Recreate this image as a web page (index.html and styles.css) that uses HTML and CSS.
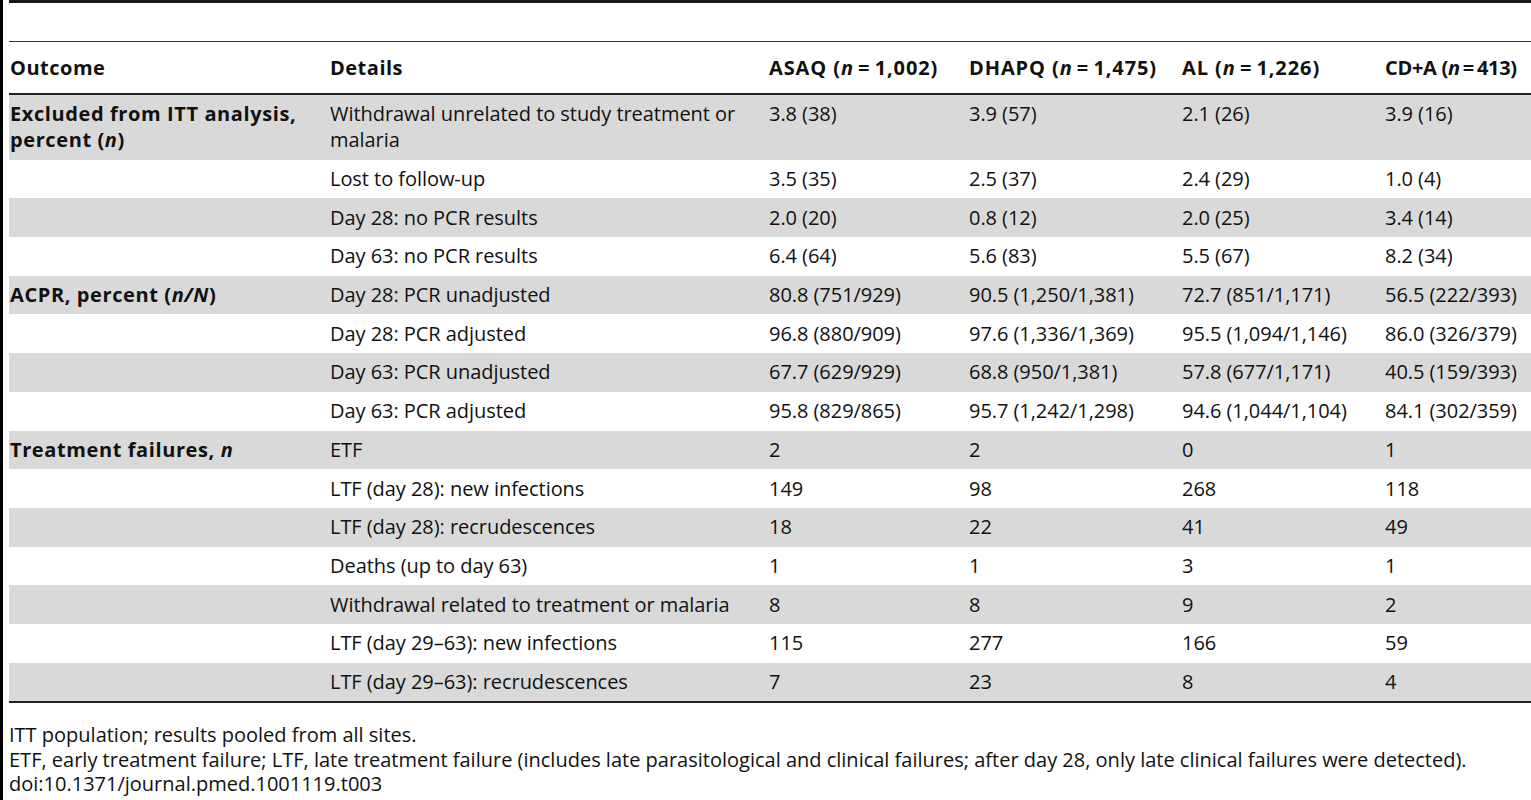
FILE: index.html
```html
<!DOCTYPE html>
<html lang="en">
  <head>
    <meta charset="UTF-8" />
    <title>Table 3 - Outcomes</title>
    <link rel="stylesheet" href="styles.css">
  </head>
  <body>
    <div class="page">
      <div class="caption-space"></div>
      <table class="results">
        <colgroup>
          <col class="c-outcome">
          <col class="c-details">
          <col class="c-asaq">
          <col class="c-dhapq">
          <col class="c-al">
          <col class="c-cda">
        </colgroup>
        <thead>
          <tr>
            <th>Outcome</th>
            <th>Details</th>
            <th class="arm">ASAQ (<i>n</i>&thinsp;=&thinsp;1,002)</th>
            <th class="arm">DHAPQ (<i>n</i>&thinsp;=&thinsp;1,475)</th>
            <th class="arm">AL (<i>n</i>&thinsp;=&thinsp;1,226)</th>
            <th class="arm narrow">CD+A (<i>n</i>&thinsp;=&thinsp;413)</th>
          </tr>
        </thead>
        <tbody>
          <!-- excluded -->
          <tr class="shade">
            <td class="group">Excluded from ITT analysis, percent (<i>n</i>)</td>
            <td>Withdrawal unrelated to study treatment or malaria</td>
            <td>3.8 (38)</td><td>3.9 (57)</td><td>2.1 (26)</td><td>3.9 (16)</td>
          </tr>
          <tr>
            <td></td><td>Lost to follow-up</td>
            <td>3.5 (35)</td><td>2.5 (37)</td><td>2.4 (29)</td><td>1.0 (4)</td>
          </tr>
          <tr class="shade">
            <td></td><td>Day 28: no PCR results</td>
            <td>2.0 (20)</td><td>0.8 (12)</td><td>2.0 (25)</td><td>3.4 (14)</td>
          </tr>
          <tr>
            <td></td><td>Day 63: no PCR results</td>
            <td>6.4 (64)</td><td>5.6 (83)</td><td>5.5 (67)</td><td>8.2 (34)</td>
          </tr>
          <!-- ACPR -->
          <tr class="shade">
            <td class="group">ACPR, percent (<i>n/N</i>)</td>
            <td>Day 28: PCR unadjusted</td>
            <td>80.8 (751/929)</td><td>90.5 (1,250/1,381)</td><td>72.7 (851/1,171)</td><td>56.5 (222/393)</td>
          </tr>
          <tr>
            <td></td><td>Day 28: PCR adjusted</td>
            <td>96.8 (880/909)</td><td>97.6 (1,336/1,369)</td><td>95.5 (1,094/1,146)</td><td>86.0 (326/379)</td>
          </tr>
          <tr class="shade">
            <td></td><td>Day 63: PCR unadjusted</td>
            <td>67.7 (629/929)</td><td>68.8 (950/1,381)</td><td>57.8 (677/1,171)</td><td>40.5 (159/393)</td>
          </tr>
          <tr>
            <td></td><td>Day 63: PCR adjusted</td>
            <td>95.8 (829/865)</td><td>95.7 (1,242/1,298)</td><td>94.6 (1,044/1,104)</td><td>84.1 (302/359)</td>
          </tr>
          <!-- failures -->
          <tr class="shade">
            <td class="group">Treatment failures, <i>n</i></td>
            <td>ETF</td>
            <td>2</td><td>2</td><td>0</td><td>1</td>
          </tr>
          <tr>
            <td></td><td>LTF (day 28): new infections</td>
            <td>149</td><td>98</td><td>268</td><td>118</td>
          </tr>
          <tr class="shade">
            <td></td><td>LTF (day 28): recrudescences</td>
            <td>18</td><td>22</td><td>41</td><td>49</td>
          </tr>
          <tr>
            <td></td><td>Deaths (up to day 63)</td>
            <td>1</td><td>1</td><td>3</td><td>1</td>
          </tr>
          <tr class="shade">
            <td></td><td>Withdrawal related to treatment or malaria</td>
            <td>8</td><td>8</td><td>9</td><td>2</td>
          </tr>
          <tr>
            <td></td><td>LTF (day 29–63): new infections</td>
            <td>115</td><td>277</td><td>166</td><td>59</td>
          </tr>
          <tr class="shade">
            <td></td><td>LTF (day 29–63): recrudescences</td>
            <td>7</td><td>23</td><td>8</td><td>4</td>
          </tr>
        </tbody>
      </table>

      <div class="notes">
        <p>ITT population; results pooled from all sites.</p>
        <p>ETF, early treatment failure; LTF, late treatment failure (includes late parasitological and clinical failures; after day 28, only late clinical failures were detected).</p>
        <p>doi:10.1371/journal.pmed.1001119.t003</p>
      </div>
    </div>
  </body>
</html>
```

FILE: styles.css
```css
body {
  margin: 0;
  font-family: "Open Sans", "DejaVu Sans", sans-serif;
  color: #111;
  background: #fff;
}

.page {
  border-left: 3px solid #000;
  min-height: 100vh;
  padding-left: 6px;
  box-sizing: border-box;
}

.caption-space {
  height: 38px;
  border-top: 3px solid #1a1a1a;
}

.results {
  width: 100%;
  border-collapse: collapse;
  table-layout: fixed;
  border-top: 1px solid #333;
  border-bottom: 2px solid #222;
  font-size: 20px;
}

.c-outcome { width: 320px; }
.c-details { width: 439px; }
.c-asaq { width: 200px; }
.c-dhapq { width: 213px; }
.c-al { width: 203px; }
.c-cda { width: 147px; }

.results th {
  text-align: left;
  font-weight: 700;
  height: 51px;
  padding: 0 1px;
  border-bottom: 2px solid #222;
  line-height: 26px;
  letter-spacing: 0.5px;
  white-space: nowrap;
}

.results th.arm {
  letter-spacing: 0.9px;
}

.results th.narrow {
  letter-spacing: -0.3px;
}

.results td {
  padding: 6.35px 8px 6.35px 1px;
  line-height: 26px;
  vertical-align: top;
  letter-spacing: -0.05px;
}

.results td.group {
  font-weight: 700;
  letter-spacing: 0.6px;
}

.results tr.shade td {
  background: #d9d9d9;
}

.notes {
  margin-top: 20px;
  font-size: 20px;
  line-height: 24.5px;
}

.notes p {
  margin: 0;
}
```
